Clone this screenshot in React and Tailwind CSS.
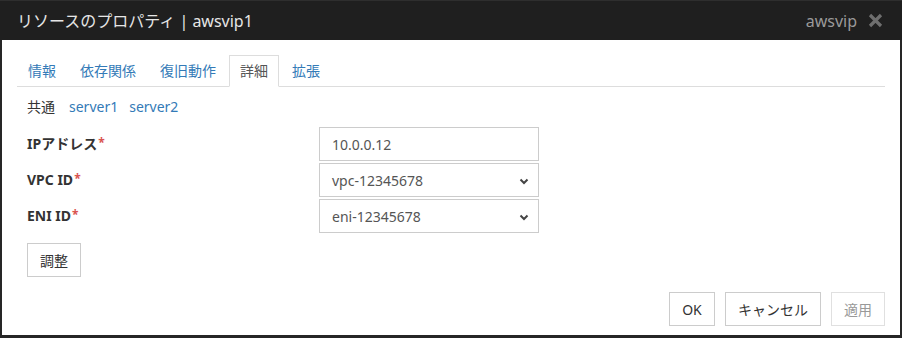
import React from "react";

const font = { fontFamily: '"Noto Sans", "Noto Sans CJK JP", sans-serif' };

function Chevron() {
  return (
    <svg width="10" height="7" viewBox="0 0 10 7" className="absolute right-[9px] top-[14px]">
      <path d="M1.5 1.5 L5 5 L8.5 1.5" fill="none" stroke="#444" strokeWidth="2" />
    </svg>
  );
}

function Label({ children }) {
  return (
    <div className="w-[302px] pl-[10px] text-[14px] font-bold text-[#333] leading-[20px]">
      {children}
      <sup className="text-[#d9534f] text-[12px] ml-[1px] relative top-[-2px]">*</sup>
    </div>
  );
}

export default function App() {
  const tabs = ["情報", "依存関係", "復旧動作", "詳細", "拡張"];
  return (
    <div className="w-[902px] h-[338px] bg-[#262626] flex flex-col" style={font}>
      <div className="h-[40px] bg-[#1f1f1f] border-t border-[#2e2e2e] flex items-center pl-[17px] pr-[19px]">
        <div className="text-[16px] text-[#e6e6e6] leading-none flex-1">リソースのプロパティ | awsvip1</div>
        <div className="text-[16px] text-[#9a9a9a] leading-none mr-[11px]">awsvip</div>
        <svg width="15" height="15" viewBox="0 0 15 15">
          <path d="M2 2 L13 13 M13 2 L2 13" stroke="#6e6e6e" strokeWidth="3.2" strokeLinecap="butt" />
        </svg>
      </div>
      <div className="mx-[2px] h-[295px] bg-white px-[15px] pt-[15px] flex flex-col">
        <div className="flex border-b border-[#dddddd] h-[32px]">
          {tabs.map((t) => (
            <div
              key={t}
              className={
                "px-[10px] py-[5px] mr-[2px] text-[14px] leading-[20px] border -mb-px " +
                (t === "詳細"
                  ? "border-[#dddddd] border-b-white text-[#555] bg-white"
                  : "border-transparent text-[#337ab7]")
              }
            >
              {t}
            </div>
          ))}
        </div>
        <div className="mt-[10px] pl-[10px] flex text-[14px] leading-[20px] h-[20px]">
          <span className="text-[#333] mr-[14px]">共通</span>
          <span className="text-[#337ab7] mr-[11px]">server1</span>
          <span className="text-[#337ab7]">server2</span>
        </div>
        <div className="mt-[10px] flex flex-col gap-[2px]">
          <div className="flex items-center h-[34px]">
            <Label>IPアドレス</Label>
            <div className="w-[220px] h-[34px] border border-[#cccccc] px-[12px] flex items-center text-[14px] text-[#555]">
              10.0.0.12
            </div>
          </div>
          <div className="flex items-center h-[34px]">
            <Label>VPC ID</Label>
            <div className="relative w-[220px] h-[34px] border border-[#cccccc] px-[12px] flex items-center text-[14px] text-[#555]">
              vpc-12345678
              <Chevron />
            </div>
          </div>
          <div className="flex items-center h-[34px]">
            <Label>ENI ID</Label>
            <div className="relative w-[220px] h-[34px] border border-[#cccccc] px-[12px] flex items-center text-[14px] text-[#555]">
              eni-12345678
              <Chevron />
            </div>
          </div>
        </div>
        <div className="mt-[10px] pl-[10px]">
          <div className="w-[54px] h-[34px] border border-[#cccccc] flex items-center justify-center text-[14px] text-[#333]">
            調整
          </div>
        </div>
        <div className="mt-[15px] flex justify-end gap-[10px]">
          <div className="w-[46px] h-[34px] border border-[#cccccc] flex items-center justify-center text-[14px] text-[#333]">OK</div>
          <div className="w-[96px] h-[34px] border border-[#cccccc] flex items-center justify-center text-[14px] text-[#333]">キャンセル</div>
          <div className="w-[54px] h-[34px] border border-[#e0e0e0] flex items-center justify-center text-[14px] text-[#999]">適用</div>
        </div>
      </div>
    </div>
  );
}
